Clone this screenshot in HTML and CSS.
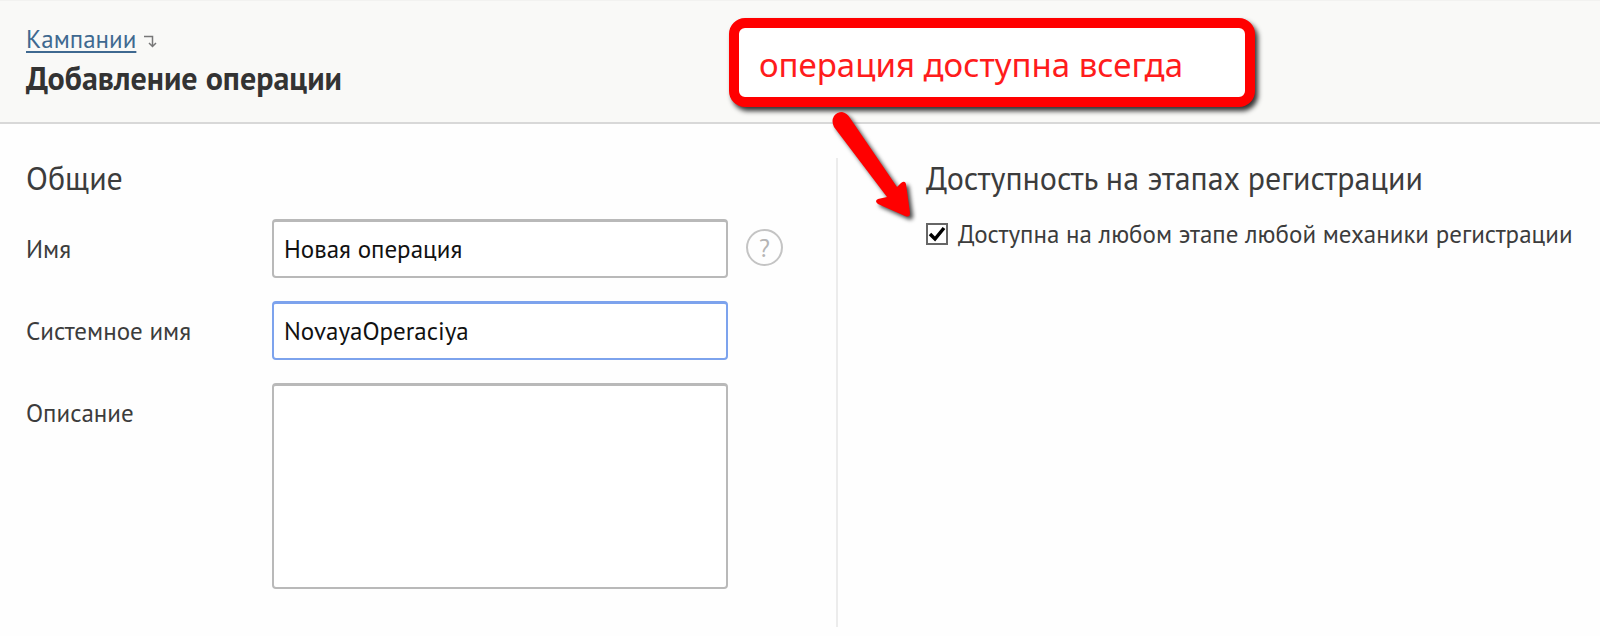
FILE: index.html
```
<!DOCTYPE html>
<html lang="ru">
<head>
	<meta charset="utf-8">
	<title>Добавление операции</title>
	<link rel="stylesheet" href="styles.css">
</head>
<body>
	<header class="header">
		<nav class="breadcrumbs">
			<a href="#">Кампании</a>
			<svg class="crumb-arrow" width="14" height="14" viewBox="0 0 14 14">
				<path d="M0 2.500H8.500V12M5 9L8.500 12.500L12 9" fill="none" stroke="#777" stroke-width="1.500"/>
			</svg>
		</nav>
		<h1>Добавление операции</h1>
	</header>

	<form class="content">
		<section class="general">
			<h2>Общие</h2>
			<div class="row">
				<label for="name">Имя</label>
				<input type="text" id="name" name="name" value="Новая операция">
				<button type="button" class="help">?</button>
			</div>
			<div class="row">
				<label for="systemName">Системное имя</label>
				<input type="text" id="systemName" class="active" name="systemName" value="NovayaOperaciya">
			</div>
			<div class="row">
				<label for="description">Описание</label>
				<textarea id="description" name="description"></textarea>
			</div>
		</section>

		<section class="availability">
			<h2>Доступность на этапах регистрации</h2>
			<div class="check">
				<input type="checkbox" id="anyStep" name="anyStep" checked>
				<label for="anyStep">Доступна на любом этапе любой механики регистрации</label>
			</div>
		</section>
	</form>

	<!-- hint over the form -->
	<div class="callout">операция доступна всегда</div>
	<svg class="pointer" width="100" height="120" viewBox="0 0 100 120">
		<path d="M14 24Q11 18 14 13Q17 9 22 9Q27 10 30 15L77 84L81 80Q85 77 86 81L90 110Q90 115 85 113L58 101Q54 98 58 96L67 94Z" fill="#f00"/>
	</svg>
</body>
</html>
```
FILE: styles.css
```
body {
	position: relative;
	margin: 0;
	color: #3c3c3c;
	background-color: #fefefe;
	font-family: "PT Sans", "Noto Sans", sans-serif;
	font-size: 25px;
	line-height: 30px;
}

.header {
	padding: 23px 26px 25px;
	background-color: #f9f9f7;
	border-top: 1px solid #f2f2f0;
	border-bottom: 2px solid #d8d8d8;
}

.breadcrumbs {
	display: flex;
	align-items: center;
	gap: 8px;
}

.breadcrumbs a {
	color: #3f6990;
	text-decoration-thickness: 2px;
	text-underline-offset: 3px;
}

.crumb-arrow {
	margin-top: 4px;
}

h1 {
	margin: 6px 0 0;
	color: #333;
	font-size: 32px;
	line-height: 37px;
}

h2 {
	margin: 0 0 20px;
	font-size: 32px;
	font-weight: normal;
	line-height: 41px;
}

.content {
	display: grid;
	grid-template-columns: 812fr 736fr;
	padding: 34px 26px 10px;
}

.general {
	padding-bottom: 38px;
	border-right: 2px solid #ececec;
}

.row {
	display: grid;
	grid-template-columns: 228px 1fr 36px;
	column-gap: 18px;
	align-items: start;
	margin-right: 54px;
	margin-bottom: 23px;
}

.row:last-child {
	margin-bottom: 0;
}

.row label {
	padding-top: 15px;
}

.row input, .row textarea {
	box-sizing: border-box;
	width: 100%;
	height: 59px;
	margin: 0;
	padding: 0 10px;
	color: #111;
	background-color: #fff;
	border: 2px solid #b9b9b9;
	border-top-width: 3px;
	border-radius: 4px;
	outline: none;
	font: inherit;
}

.row textarea {
	display: block;
	height: 206px;
	padding: 10px;
	resize: none;
}

.row .active {
	border-color: #7da3ed;
}

.help {
	width: 37px;
	height: 37px;
	margin-top: 10px;
	padding: 0;
	color: #b5b5b5;
	background: none;
	border: 2px solid #c4c4c4;
	border-radius: 50%;
	font: inherit;
	line-height: 32px;
}

.availability {
	padding-left: 88px;
}

.check {
	display: flex;
	align-items: center;
	gap: 10px;
	white-space: nowrap;
}

.check input {
	appearance: none;
	flex: none;
	width: 22px;
	height: 22px;
	margin: 0;
	background-color: #fff;
	border: 2px solid #666;
}

.check input:checked {
	background-image: url("data:image/svg+xml,%3Csvg xmlns='http://www.w3.org/2000/svg' viewBox='0 0 18 18'%3E%3Cpath d='M2 9L7 14L16 3' fill='none' stroke='%23000' stroke-width='3.500'/%3E%3C/svg%3E");
}

.callout {
	position: absolute;
	top: 18px;
	left: 729px;
	padding: 17px 62px 12px 20px;
	color: #ff1c1c;
	background-color: #fff;
	border: 10px solid #f00;
	border-radius: 16px;
	box-shadow: 3px 4px 5px #333;
	font-family: "Noto Sans", sans-serif;
	font-size: 33px;
	line-height: 40px;
	white-space: nowrap;
}

.pointer {
	position: absolute;
	top: 103px;
	left: 820px;
	filter: drop-shadow(3px 3px 2px #444);
}
```
